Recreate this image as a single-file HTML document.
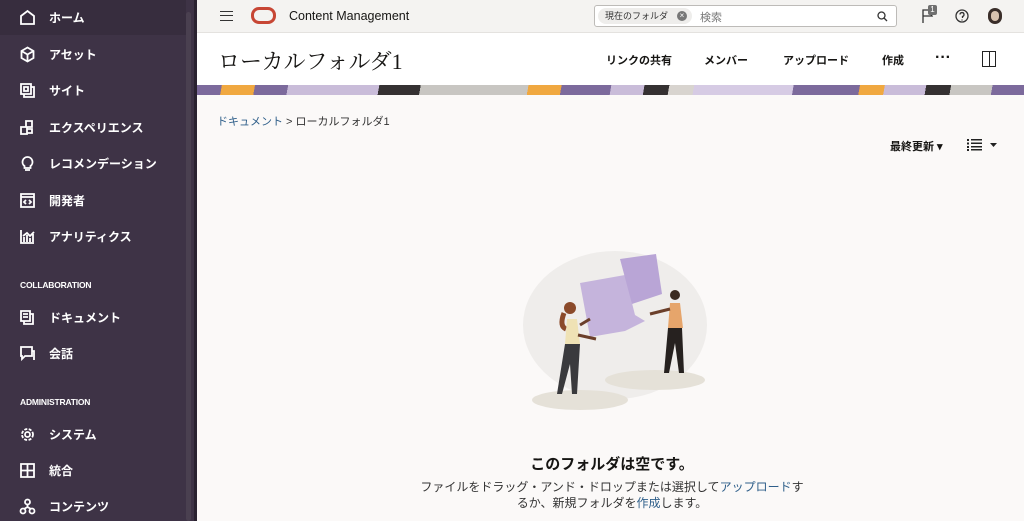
<!DOCTYPE html>
<html><head><meta charset="utf-8"><style>
*{margin:0;padding:0;box-sizing:border-box}
body{width:1024px;height:521px;overflow:hidden;font-family:"Liberation Sans","Noto Sans CJK JP",sans-serif;background:#fbf9f8;position:relative}
.side{position:absolute;left:0;top:0;width:197px;height:521px;background:#3e3346;color:#fff}
.side .home{position:absolute;left:0;top:0;width:186px;height:35px;background:#372d3e}
.scroll{position:absolute;left:186px;top:12px;width:5px;height:509px;background:#4a4050;border-radius:3px}
.edge{position:absolute;left:194px;top:0;width:3px;height:521px;background:#2a2230}
.item{position:absolute;left:19px;font-size:12px;font-weight:bold;display:flex;align-items:center;height:20px}
.item svg{width:17px;height:17px;margin-right:13px;stroke:#fff;fill:none;stroke-width:1.8}
.sec{position:absolute;left:20px;font-size:8.5px;font-weight:bold;letter-spacing:-0.2px}
.top{position:absolute;left:197px;top:0;right:0;height:33px;background:#f4f3f1;border-bottom:1px solid #e4e2df}
.title{position:absolute;left:197px;top:33px;right:0;height:52px;background:#fff}
.banner{position:absolute;left:197px;top:85px;right:0;height:10px;background:linear-gradient(100deg,#7c6a9c 0 3%,#f0a840 3% 7%,#7c6a9c 7% 11%,#c9bcd9 11% 22%,#353132 22% 27%,#c8c6c2 27% 40%,#f0a840 40% 44%,#7c6a9c 44% 50%,#c9bcd9 50% 54%,#353132 54% 57%,#d8d4cf 57% 60%,#d6cbe4 60% 72%,#7c6a9c 72% 80%,#f0a840 80% 83%,#c9bcd9 83% 88%,#353132 88% 91%,#c8c6c2 91% 96%,#7c6a9c 96% 100%)}
.act{position:absolute;top:52px;font-size:11px;font-weight:bold;color:#161513}
.link{color:#2f5f8a}
</style></head><body>
<div class="side">
<div class="home"></div><div class="scroll"></div><div class="edge"></div>
<div class="item" style="top:7px"><svg viewBox="0 0 17 17"><path d="M2 15V7l6.5-5L15 7v8z"/></svg>ホーム</div>
<div class="item" style="top:44px"><svg viewBox="0 0 17 17"><path d="M8.5 1.5l6 3.5v7l-6 3.5-6-3.5V5zM2.5 5l6 3.5 6-3.5M8.5 8.5v7"/></svg>アセット</div>
<div class="item" style="top:80px"><svg viewBox="0 0 17 17"><path d="M2 2h10v10H2zM5 5h4v4H5zM12 5h3v10H5v-3"/></svg>サイト</div>
<div class="item" style="top:117px"><svg viewBox="0 0 17 17"><path d="M7 2h6v6H7zM2 8h6v7H2zM8 10h5v4H8"/></svg>エクスペリエンス</div>
<div class="item" style="top:153px"><svg viewBox="0 0 17 17"><path d="M8.5 2a5 5 0 0 1 3 9v2h-6v-2a5 5 0 0 1 3-9zM6 15h5"/></svg>レコメンデーション</div>
<div class="item" style="top:190px"><svg viewBox="0 0 17 17"><path d="M2 2h13v13H2zM2 5h13M7 8l-2 2 2 2M10 8l2 2-2 2"/></svg>開発者</div>
<div class="item" style="top:226px"><svg viewBox="0 0 17 17"><path d="M2 2v13h13M5 14V9M8 14V7M11 14V10M14 14V6M4 8l4-3 3 3 4-4"/></svg>アナリティクス</div>
<div class="sec" style="top:280px">COLLABORATION</div>
<div class="item" style="top:307px"><svg viewBox="0 0 17 17"><path d="M2 2h9v10H2zM4 5h5M4 8h5M11 5h3v10H5v-3"/></svg>ドキュメント</div>
<div class="item" style="top:343px"><svg viewBox="0 0 17 17"><path d="M2 2h11v9H6l-3 3V11H2zM13 6h2v9"/></svg>会話</div>
<div class="sec" style="top:397px">ADMINISTRATION</div>
<div class="item" style="top:424px"><svg viewBox="0 0 17 17"><circle cx="8.5" cy="8.5" r="2.5"/><circle cx="8.5" cy="8.5" r="5.5" stroke-dasharray="3 1.5"/></svg>システム</div>
<div class="item" style="top:460px"><svg viewBox="0 0 17 17"><path d="M2 2h13v13H2zM8.5 2v13M2 8.5h13"/></svg>統合</div>
<div class="item" style="top:496px"><svg viewBox="0 0 17 17"><circle cx="8.5" cy="4" r="2.5"/><circle cx="4" cy="13" r="2.5"/><circle cx="13" cy="13" r="2.5"/><path d="M8.5 6.5v3M5 11l3.5-2 3.5 2"/></svg>コンテンツ</div>
</div>

<div class="top">
<div style="position:absolute;left:23px;top:11px;width:13px;height:10px;border-top:1.5px solid #333;border-bottom:1.5px solid #333"><div style="margin-top:3px;border-top:1.5px solid #333"></div></div>
<div style="position:absolute;left:54px;top:7px;width:25px;height:17px;border:3px solid #c74634;border-radius:8px"></div>
<div style="position:absolute;left:92px;top:9px;font-size:12.5px;color:#161513">Content Management</div>
<div style="position:absolute;left:397px;top:5px;width:303px;height:22px;background:#fff;border:1px solid #bdbbb8;border-radius:3px">
<div style="position:absolute;left:3px;top:2px;height:16px;width:94px;background:#eeedeb;border-radius:9px;font-size:9px;line-height:16px;padding-left:7px;color:#333">現在のフォルダ<span style="position:absolute;left:79px;top:3px;width:10px;height:10px;border-radius:50%;background:#777;color:#fff;font-size:8px;line-height:10px;text-align:center">×</span></div>
<div style="position:absolute;left:105px;top:3px;font-size:11px;color:#777">検索</div>
<svg style="position:absolute;right:8px;top:5px" width="11" height="11" viewBox="0 0 11 11" fill="none" stroke="#333" stroke-width="1.3"><circle cx="4.5" cy="4.5" r="3.5"/><path d="M7 7l3 3"/></svg>
</div>
<svg style="position:absolute;left:725px;top:8px" width="14" height="15" viewBox="0 0 14 15" fill="none" stroke="#333" stroke-width="1.3"><path d="M1 15V2h9l-2 3 2 3H1"/></svg>
<div style="position:absolute;left:731px;top:5px;width:9px;height:10px;background:#6f6f6f;color:#fff;font-size:8px;line-height:10px;text-align:center;border-radius:2px">1</div>
<svg style="position:absolute;left:758px;top:9px" width="14" height="14" viewBox="0 0 14 14" fill="none" stroke="#333" stroke-width="1.3"><circle cx="7" cy="7" r="6"/><path d="M5 5.5a2 2 0 1 1 2.5 2V9M7 10.5v1"/></svg>
<div style="position:absolute;left:791px;top:8px;width:14px;height:16px;border-radius:7px;background:#3a2e2a"><div style="margin:3px 3px;width:8px;height:10px;border-radius:4px;background:#d9c3b0"></div></div>
</div>

<div class="title">
<div style="position:absolute;left:21px;top:12px;font-family:'Liberation Serif','Noto Serif CJK SC',serif;font-size:22px;color:#161513">ローカルフォルダ1</div>
<div class="act" style="left:409px;top:19px">リンクの共有</div>
<div class="act" style="left:507px;top:19px">メンバー</div>
<div class="act" style="left:586px;top:19px">アップロード</div>
<div class="act" style="left:685px;top:19px">作成</div>
<div class="act" style="left:738px;top:16px;font-size:16px">···</div>
<div style="position:absolute;left:785px;top:18px;width:14px;height:16px;border:1.5px solid #222"><div style="margin-left:6px;height:100%;border-left:1.5px solid #222"></div></div>
</div>
<div class="banner"></div>

<div style="position:absolute;left:217px;top:113px;font-size:11px;color:#333"><span class="link">ドキュメント</span> &gt; ローカルフォルダ1</div>
<div style="position:absolute;left:890px;top:138px;font-size:11px;color:#161513;font-weight:bold">最終更新 ▾</div>
<svg style="position:absolute;left:967px;top:139px" width="32" height="12" viewBox="0 0 32 12" fill="#222"><rect x="0" y="0" width="2" height="2"/><rect x="4" y="0" width="11" height="1.5"/><rect x="0" y="3.5" width="2" height="2"/><rect x="4" y="3.5" width="11" height="1.5"/><rect x="0" y="7" width="2" height="2"/><rect x="4" y="7" width="11" height="1.5"/><rect x="0" y="10" width="2" height="2"/><rect x="4" y="10" width="11" height="1.5"/><path d="M23 4h7l-3.5 4z"/></svg>

<svg style="position:absolute;left:520px;top:245px" width="190" height="170" viewBox="0 0 190 170">
<ellipse cx="95" cy="80" rx="92" ry="74" fill="#efedeb"/>
<ellipse cx="135" cy="135" rx="50" ry="10" fill="#e5e1d8"/>
<ellipse cx="60" cy="155" rx="48" ry="10" fill="#e5e1d8"/>
<path d="M60 38l45-8 10 40 10 6-20 10-35 6z" fill="#c5b4dc"/>
<path d="M100 14l36-5 6 40-30 10z" fill="#b9a5d6"/>
<circle cx="50" cy="63" r="6" fill="#8b4a2a"/><path d="M44 68c-3 8-3 14 2 16" stroke="#8b4a2a" stroke-width="5" fill="none"/>
<path d="M47 74h10l3 25h-15z" fill="#efe2b5"/>
<path d="M45 99h15l-3 50h-5l-2-30-8 30h-5z" fill="#3a3a3d"/>
<path d="M60 80l10-6M58 90l18 4" stroke="#6b3f2a" stroke-width="3"/>
<circle cx="155" cy="50" r="5" fill="#3a2a20"/>
<path d="M150 58h10l3 25h-15z" fill="#e6a56b"/>
<path d="M148 83h14l2 45h-5l-4-30-6 30h-5z" fill="#26211f"/>
<path d="M150 64l-20 5" stroke="#6b3f2a" stroke-width="3"/>
</svg>

<div style="position:absolute;left:0;width:1224px;top:453px;text-align:center;font-size:15px;font-weight:bold;color:#161513">このフォルダは空です。</div>
<div style="position:absolute;left:0;width:1224px;top:479px;text-align:center;font-size:12px;line-height:16px;color:#333">ファイルをドラッグ・アンド・ドロップまたは選択して<span class="link">アップロード</span>す<br>るか、新規フォルダを<span class="link">作成</span>します。</div>
</body></html>
